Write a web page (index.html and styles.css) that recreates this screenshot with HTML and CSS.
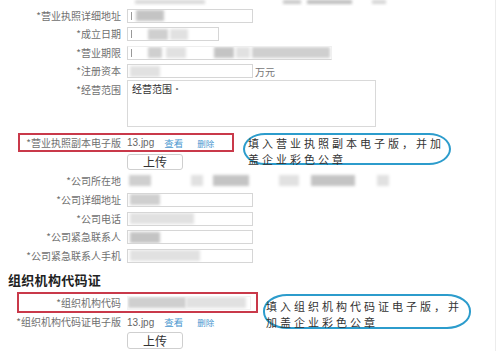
FILE: index.html
```html
<!DOCTYPE html>
<html lang="zh-CN">
<head>
<meta charset="utf-8">
<title>企业信息</title>
<link rel="stylesheet" href="styles.css">
</head>
<body>
<div class="page">
  <div class="topstrip">
    <span class="blur t1"></span><span class="blur t2"></span><span class="blur t3"></span><span class="blur t4"></span>
  </div>

  <div class="row h19">
    <span class="lbl">*营业执照详细地址</span>
    <div class="input w126"><span class="caret"></span><span class="blur g1 a1"></span></div>
  </div>
  <div class="row h18">
    <span class="lbl">*成立日期</span>
    <div class="input w92"><span class="caret"></span><span class="blur g2 a2"></span><span class="blur g3 a3"></span></div>
  </div>
  <div class="row h19">
    <span class="lbl">*营业期限</span>
    <div class="input w205 noborder-r"><span class="caret"></span><span class="blur g2 a4"></span><span class="blur g3 a5"></span><span class="blur g1 a6"></span><span class="blur g3 a7"></span><span class="blur g2 a8"></span></div>
  </div>
  <div class="row h18">
    <span class="lbl">*注册资本</span>
    <div class="field-inline"><div class="input w126"><span class="blur g3 a9"></span></div><span class="unit">万元</span></div>
  </div>
  <div class="row area-row">
    <span class="lbl top">*经营范围</span>
    <div class="textarea">经营范围<span class="dot">•</span></div>
  </div>

  <div class="annot-row first">
    <div class="redbox rb1">
      <span class="lbl">*营业执照副本电子版</span>
      <div class="files"><span class="fname">13.jpg</span><span class="link">查看</span><span class="link small">删除</span></div>
    </div>
    <div class="oval o1"><span class="ln">填入营业执照副本电子版，并加</span><span class="ln">盖企业彩色公章</span></div>
  </div>
  <div class="row h18">
    <span></span>
    <button class="upload">上传</button>
  </div>

  <div class="row h19">
    <span class="lbl">*公司所在地</span>
    <div class="selects"><span class="blur g2 s1"></span><span class="blur g3 s2"></span><span class="blur g1 s3"></span><span class="blur g3 s4"></span><span class="blur g1 s5"></span><span class="blur g3 s6"></span></div>
  </div>
  <div class="row h19">
    <span class="lbl">*公司详细地址</span>
    <div class="input w126"><span class="blur g2 c1"></span></div>
  </div>
  <div class="row h19">
    <span class="lbl">*公司电话</span>
    <div class="input w126"><span class="blur g3 c2"></span></div>
  </div>
  <div class="row h18">
    <span class="lbl">*公司紧急联系人</span>
    <div class="input w126"><span class="blur g1 c3"></span></div>
  </div>
  <div class="row h19">
    <span class="lbl">*公司紧急联系人手机</span>
    <div class="input w126"><span class="blur g3 c4"></span></div>
  </div>

  <h2 class="section">组织机构代码证</h2>

  <div class="annot-row second">
    <div class="redbox rb2">
      <span class="lbl">*组织机构代码</span>
      <div class="input w124 flat"><span class="blur g2 c5"></span><span class="blur g3 c6"></span></div>
    </div>
    <div class="oval o2"><span class="ln">填入组织机构代码证电子版，并</span><span class="ln">加盖企业彩色公章</span></div>
  </div>
  <div class="row h18">
    <span class="lbl">*组织机构代码证电子版</span>
    <div class="files"><span class="fname">13.jpg</span><span class="link">查看</span><span class="link small">删除</span></div>
  </div>
  <div class="row h19">
    <span></span>
    <button class="upload tall">上传</button>
  </div>
</div>
</body>
</html>
```

FILE: styles.css
```css
* { box-sizing: border-box; }
html, body { margin: 0; padding: 0; background: #fff; }
body {
  font-family: "Noto Sans CJK SC", "Noto Sans", sans-serif;
  color: #666;
  font-size: 10px;
  overflow: hidden;
}
.page {
  width: 496px;
  height: 351px;
  border-right: 1px solid #ececec;
  position: relative;
}
.topstrip {
  height: 6px;
  display: flex;
  align-items: flex-start;
  overflow: hidden;
}
.topstrip .blur { height: 4px; }
.t1 { margin-left: 135px; width: 70px; background: #d8d8d8; }
.t2 { margin-left: 78px; width: 18px; background: #c8c8c8; }
.t3 { margin-left: 6px; width: 45px; background: #bdbdbd; }
.t4 { margin-left: 20px; width: 14px; background: #d5d5d5; }

.row {
  display: grid;
  grid-template-columns: 121px auto;
  column-gap: 6px;
  align-items: center;
  justify-content: start;
}
.h18 { height: 18px; }
.h19 { height: 19px; }

.lbl {
  text-align: right;
  white-space: nowrap;
  color: #707070;
  font-size: 10px;
  line-height: 12px;
}
.lbl.top { align-self: start; margin-top: 4px; }

.input {
  height: 14px;
  border: 1px solid #d6d6d6;
  background: #fff;
  display: flex;
  align-items: center;
  overflow: hidden;
}
.w126 { width: 126px; }
.w124 { width: 124px; }
.w92 { width: 92px; }
.w205 { width: 205px; }
.noborder-r { border-right-color: #f0f0f0; border-top-color: #eee; }
.input.flat { border-color: #f2f2f2; }

.caret {
  width: 1px; height: 8px; background: #999; margin-left: 3px; flex: none;
}
.blur {
  display: block;
  flex: none;
  height: 11px;
  filter: blur(1.6px);
}
.g1 { background: #c4c4c4; }
.g2 { background: #cfcfcf; }
.g3 { background: #e1e1e1; }
.a1 { margin-left: 4px; width: 28px; }
.a2 { margin-left: 16px; width: 20px; }
.a3 { margin-left: 2px; width: 18px; }
.a4 { margin-left: 16px; width: 14px; }
.a5 { margin-left: 4px; width: 20px; }
.a6 { margin-left: 28px; width: 20px; }
.a7 { margin-left: 2px; width: 14px; }
.a8 { margin-left: 2px; width: 78px; }
.a9 { margin-left: 2px; width: 30px; }

.field-inline { display: flex; align-items: center; }
.unit { margin-left: 2px; color: #777; font-size: 10px; }

.area-row { height: 53px; align-items: start; }
.textarea {
  width: 249px;
  height: 47px;
  border: 1px solid #d9d9d9;
  padding: 2px 4px;
  color: #333;
  font-size: 10px;
  line-height: 12px;
}
.dot { color: #777; }

.annot-row { position: relative; }
.annot-row.first { height: 20px; }
.annot-row.second { height: 21px; }
.redbox {
  border: 2px solid #c9394a;
  display: grid;
  grid-template-columns: 101px auto;
  column-gap: 6px;
  align-items: center;
  justify-content: start;
}
.rb1 { margin-left: 18px; width: 216px; height: 19px; }
.rb2 { margin-left: 17px; width: 241px; height: 21px; grid-template-columns: 102px auto; }

.files { display: flex; align-items: center; white-space: nowrap; }
.fname { color: #666; font-family: "Liberation Sans", "Noto Sans", sans-serif; font-size: 10px; }
.link { color: #4a97cf; margin-left: 10px; font-size: 9.5px; }
.link.small { margin-left: 14px; font-size: 8.5px; }

.upload {
  width: 56px;
  height: 16px;
  padding: 0;
  border: 1px solid #cfcfcf;
  border-radius: 3px;
  background: #fff;
  font-family: "Noto Sans CJK SC", sans-serif;
  font-size: 12px;
  line-height: 14px;
  color: #333;
}
.upload.tall { height: 17px; }

.selects { display: flex; align-items: center; height: 14px; }
.s1 { width: 22px; margin-left: 2px; }
.s2 { width: 12px; margin-left: 40px; }
.s3 { width: 36px; margin-left: 10px; }
.s4 { width: 20px; margin-left: 30px; }
.s5 { width: 44px; margin-left: 12px; }
.s6 { width: 12px; margin-left: 22px; }
.c1 { margin-left: 2px; width: 30px; }
.c2 { margin-left: 2px; width: 64px; }
.c3 { margin-left: 2px; width: 30px; }
.c4 { margin-left: 2px; width: 70px; }
.c5 { margin-left: 0; width: 58px; }
.c6 { margin-left: 0; width: 60px; }

.section {
  margin: 5px 0 2px 8px;
  height: 20px;
  font-size: 13px;
  line-height: 20px;
  font-weight: bold;
  color: #222;
  letter-spacing: 0.3px;
}

.oval {
  position: absolute;
  border: 2px solid #2c9ccc;
  color: #333;
  font-size: 11px;
  letter-spacing: 3px;
  line-height: 16px;
  white-space: nowrap;
  display: flex;
  flex-direction: column;
}
.ln { display: block; height: 14px; line-height: 16px; }
.o1 {
  left: 243px; top: 0;
  width: 208px; height: 32px;
  border-radius: 22px / 16px;
  padding: 0 0 0 3px;
}
.o1 .ln:last-child { margin-top: 2px; }
.o2 {
  left: 263px; top: 2px;
  width: 208px; height: 35px;
  border-radius: 24px / 17px;
  padding: 2px 0 0 1px;
}
.o2 .ln:last-child { margin-top: 2px; }
```
